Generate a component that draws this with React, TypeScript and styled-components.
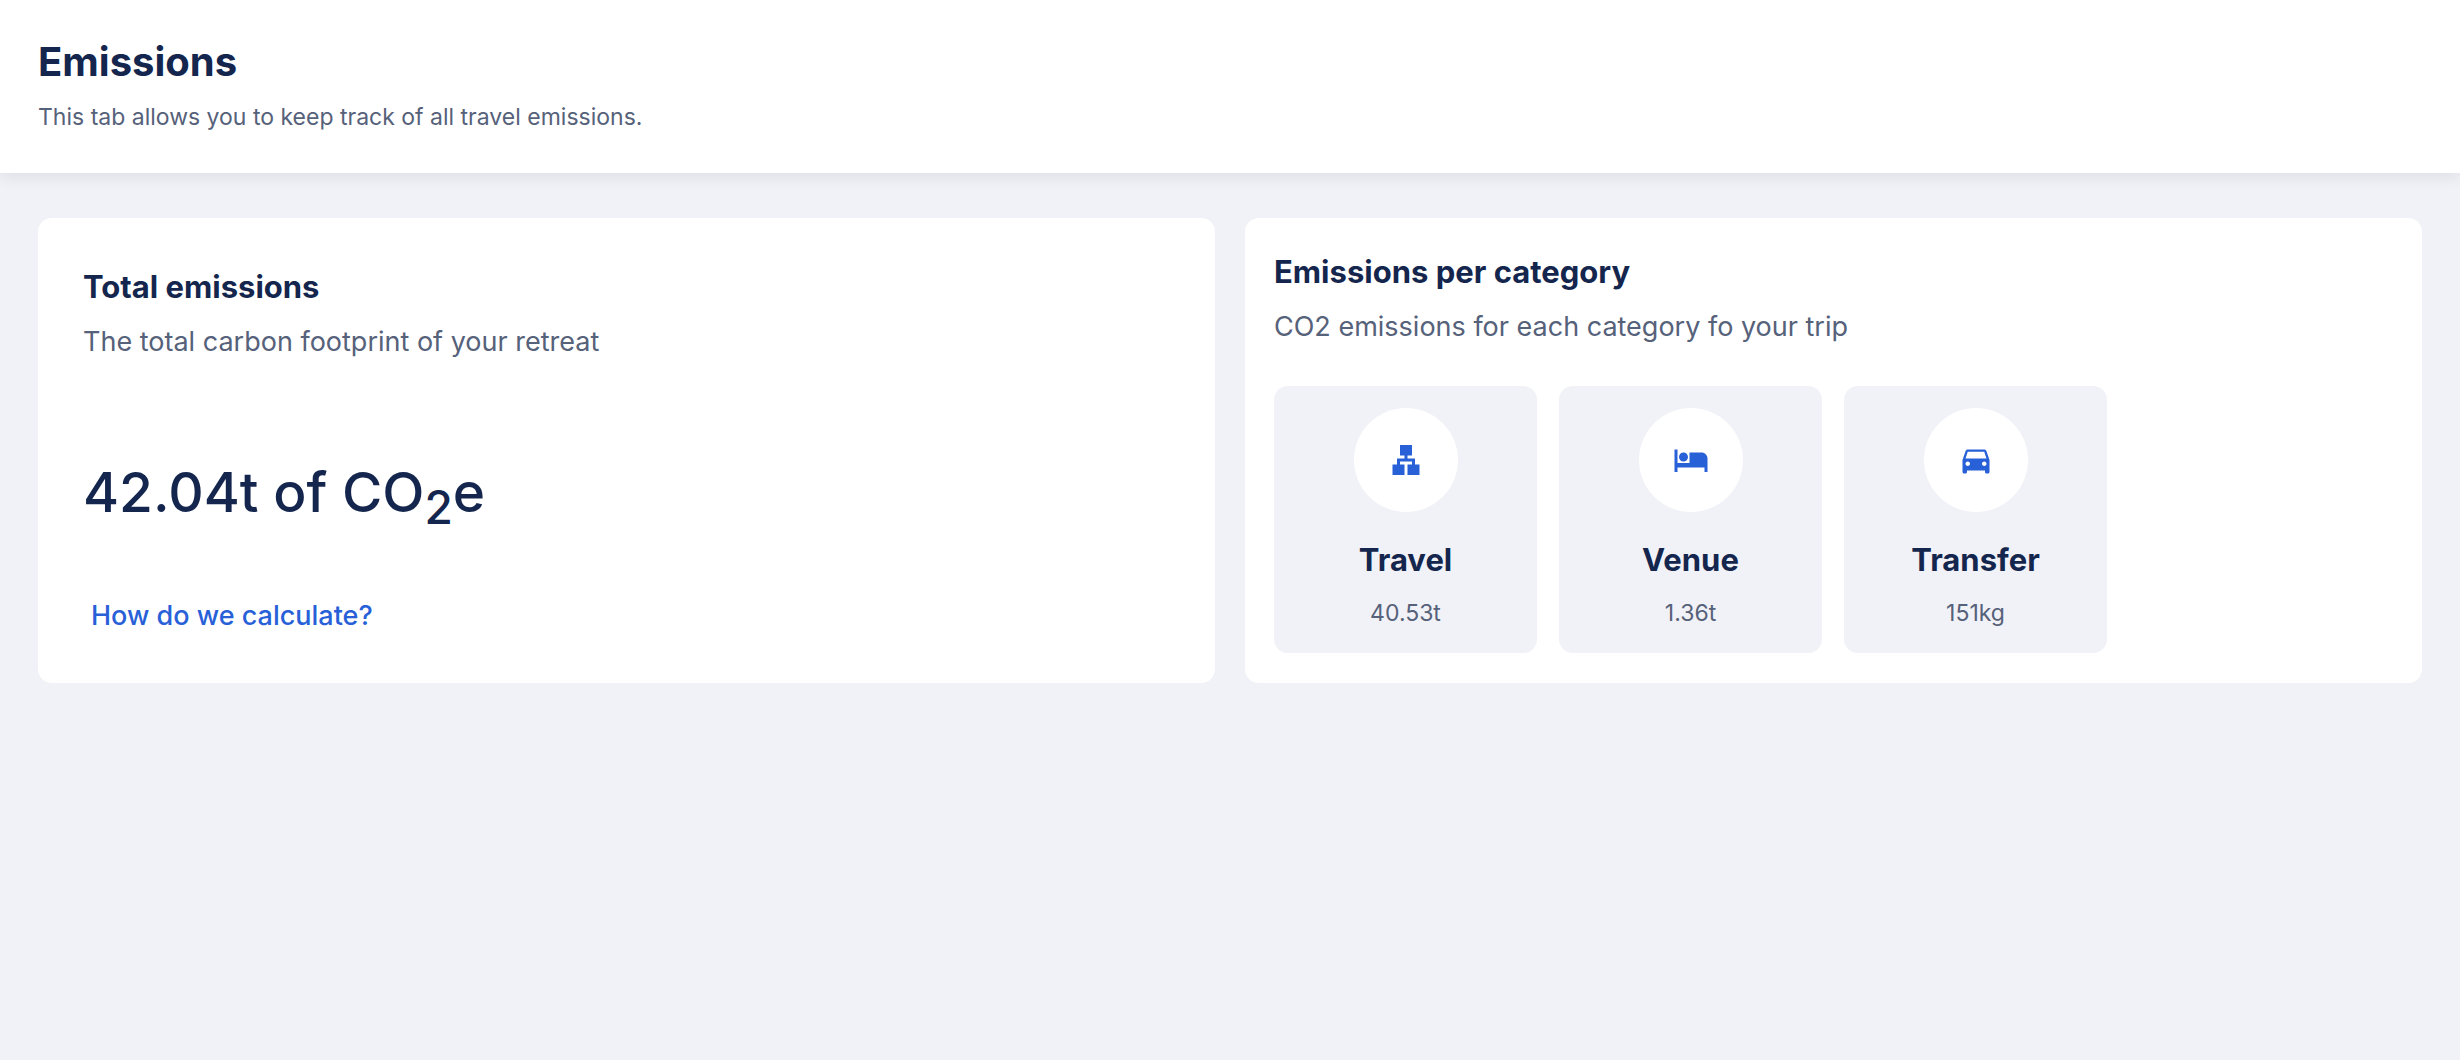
import React from "react";
import styled, { createGlobalStyle } from "styled-components";
import { MdDirectionsCar, MdHotel, MdLan } from "react-icons/md";
import type { IconType } from "react-icons";

const color = {
  ink: "#14264d",
  muted: "#56617a",
  accent: "#2860d8",
  canvas: "#f1f2f7",
  surface: "#ffffff",
};

const GlobalStyle = createGlobalStyle`
  *, *::before, *::after { box-sizing: border-box; }
  body {
    margin: 0;
    background: ${color.canvas};
    font-family: Inter, "Liberation Sans", sans-serif;
    color: ${color.ink};
    -webkit-font-smoothing: antialiased;
  }
  h1, h2, h3, p { margin: 0; }
`;

const Page = styled.div`
  display: flex;
  flex-direction: column;
  min-height: 100vh;
`;

const Header = styled.header`
  padding: 36px 38px 38px;
  background: ${color.surface};
  box-shadow: 0 5px 14px rgba(20, 20, 40, 0.08);
`;

const PageTitle = styled.h1`
  font-size: 40px;
  line-height: 52px;
  font-weight: 700;
`;

const PageIntro = styled.p`
  margin-top: 11px;
  font-size: 23px;
  line-height: 36px;
  color: ${color.muted};
`;

const Main = styled.main`
  display: grid;
  grid-template-columns: repeat(2, minmax(0, 1fr));
  align-items: stretch;
  gap: 30px;
  padding: 45px 38px;
`;

const Card = styled.section<{ $roomy?: boolean }>`
  display: flex;
  flex-direction: column;
  align-items: flex-start;
  padding: ${({ $roomy }) => ($roomy ? "45px" : "30px 29px")};
  border-radius: 14px;
  background: ${color.surface};
`;

const CardTitle = styled.h2`
  font-size: 31px;
  line-height: 48px;
  font-weight: 700;
`;

const CardIntro = styled.p`
  margin-top: 8px;
  font-size: 27px;
  line-height: 46px;
  color: ${color.muted};
`;

const Total = styled.p`
  margin: auto 0;
  padding-top: 24px;
  font-size: 55px;
  line-height: 72px;
  font-weight: 500;

  sub {
    font-size: 46px;
    line-height: 0;
  }
`;

const LinkButton = styled.button`
  padding: 0 8px;
  border: 0;
  background: none;
  font: inherit;
  font-size: 27px;
  line-height: 44px;
  font-weight: 500;
  color: ${color.accent};
  cursor: pointer;
`;

const Tiles = styled.ul`
  display: flex;
  flex-wrap: wrap;
  gap: 22px;
  margin: 36px 0 0;
  padding: 0;
  list-style: none;
`;

const Tile = styled.li`
  display: flex;
  flex-direction: column;
  align-items: center;
  width: 263px;
  padding: 22px;
  border-radius: 14px;
  background: ${color.canvas};
`;

const IconDisc = styled.span`
  display: grid;
  place-items: center;
  width: 104px;
  height: 104px;
  border-radius: 50%;
  background: ${color.surface};
  color: ${color.accent};
  font-size: 36px;
`;

const TileTitle = styled.h3`
  margin-top: 24px;
  font-size: 31px;
  line-height: 48px;
  font-weight: 700;
`;

const TileValue = styled.p`
  margin-top: 11px;
  font-size: 23px;
  line-height: 36px;
  color: ${color.muted};
`;

const categories: { name: string; amount: string; icon: IconType }[] = [
  { name: "Travel", amount: "40.53t", icon: MdLan },
  { name: "Venue", amount: "1.36t", icon: MdHotel },
  { name: "Transfer", amount: "151kg", icon: MdDirectionsCar },
];

export default function App() {
  return (
    <Page>
      <GlobalStyle />
      <Header>
        <PageTitle>Emissions</PageTitle>
        <PageIntro>This tab allows you to keep track of all travel emissions.</PageIntro>
      </Header>
      <Main>
        <Card $roomy>
          <CardTitle>Total emissions</CardTitle>
          <CardIntro>The total carbon footprint of your retreat</CardIntro>
          <Total>
            42.04t of CO<sub>2</sub>e
          </Total>
          <LinkButton type="button">How do we calculate?</LinkButton>
        </Card>
        <Card>
          <CardTitle>Emissions per category</CardTitle>
          <CardIntro>CO2 emissions for each category fo your trip</CardIntro>
          <Tiles>
            {categories.map(({ name, amount, icon: Icon }) => (
              <Tile key={name}>
                <IconDisc>
                  <Icon aria-hidden />
                </IconDisc>
                <TileTitle>{name}</TileTitle>
                <TileValue>{amount}</TileValue>
              </Tile>
            ))}
          </Tiles>
        </Card>
      </Main>
    </Page>
  );
}
